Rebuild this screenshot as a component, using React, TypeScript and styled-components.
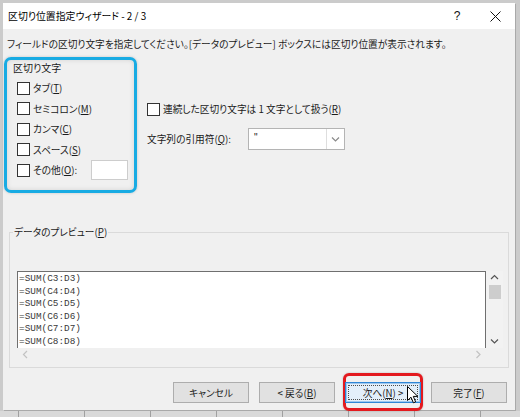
import React from 'react'
import styled, { createGlobalStyle } from 'styled-components'

const GlobalStyle = createGlobalStyle`
  body {
    margin: 0;
    background: #cbcbcb;
    font-family: "Noto Sans CJK JP", "Noto Sans", sans-serif;
    overflow: hidden;
  }
`

const Window = styled.div`
  margin: 3px 0 0 3px;
  width: 512px;
  height: 407px;
  background: #f0f0f0;
  color: #1b1b1b;
  font-size: 9.7px;
  font-feature-settings: 'palt';
  display: flex;
  flex-direction: column;
  box-shadow: 1px 1px 0 #a9a9a9;
`

const TitleBar = styled.div`
  height: 26px;
  background: #fff;
  display: flex;
  align-items: center;
  padding-left: 5px;
`

const Title = styled.div`
  flex: 1;
  font-size: 9.9px;
  color: #000;
`

const TitleButton = styled.div<{ $w: number }>`
  width: ${p => p.$w}px;
  height: 26px;
  display: flex;
  align-items: center;
  justify-content: center;
  font-family: "Liberation Sans", sans-serif;
  font-size: 12px;
  color: #111;
`

const Instruction = styled.div`
  margin: 8px 0 0 4px;
  height: 14px;
  line-height: 14px;
`

const TopRow = styled.div`
  margin-top: 6px;
  display: flex;
  align-items: flex-start;
`

const DelimiterGroup = styled.div`
  margin-left: 1px;
  width: 133px;
  height: 136px;
  box-sizing: border-box;
  border: 3px solid #18abe3;
  border-radius: 7px;
  padding-left: 6px;
  box-shadow: inset 0 0 5px rgba(0, 0, 0, 0.12), 0 0 3px rgba(0, 0, 0, 0.18);
`

const GroupLabel = styled.div`
  height: 16px;
  line-height: 16px;
  font-size: 10px;
`

const CheckList = styled.div`
  margin-top: 2px;
  padding-left: 4px;
`

const CheckRow = styled.div<{ $h?: number }>`
  display: flex;
  align-items: center;
  gap: 3px;
  height: ${p => p.$h ?? 20.5}px;
  line-height: 14px;
`

const Box = styled.span`
  width: 13px;
  height: 13px;
  box-sizing: border-box;
  border: 1px solid #333;
  background: #fff;
  flex: none;
`

const Key = styled.u`
  text-underline-offset: 1px;
`

const OtherInput = styled.div`
  margin-left: auto;
  margin-right: 6px;
  width: 37px;
  height: 20px;
  box-sizing: border-box;
  background: #fff;
  border: 1px solid #cdcdcd;
`

const Options = styled.div`
  margin-left: 10px;
  padding-top: 43px;
`

const QuoteRow = styled.div`
  margin-top: 10px;
  height: 22px;
  display: flex;
  align-items: center;
`

const QuoteLabel = styled.span`
  width: 101px;
`

const Combo = styled.div`
  width: 97px;
  height: 22px;
  box-sizing: border-box;
  border: 1px solid #b4b4b4;
  background: #fff;
  display: flex;
`

const ComboValue = styled.div`
  flex: 1;
  padding-left: 5px;
  line-height: 18px;
  font-family: "Liberation Sans", sans-serif;
  font-size: 10px;
`

const ComboDrop = styled.div`
  width: 17px;
  border-left: 1px solid #dedede;
  display: flex;
  align-items: center;
  justify-content: center;
`

const Preview = styled.fieldset`
  margin: 32px 0 0 6px;
  padding: 0;
  width: 500px;
  height: 143px;
  box-sizing: border-box;
  border: 1px solid #dadada;
`

const PreviewLegend = styled.legend`
  margin-left: 3px;
  padding: 0 1px;
  line-height: 14px;
`

const ListArea = styled.div`
  margin: 32px 0 0 7px;
  display: flex;
`

const ListBox = styled.div`
  width: 469px;
  height: 77px;
  box-sizing: border-box;
  background: #fff;
  border: 1px solid #6f6f6f;
  border-bottom: none;
  padding: 1px 0 0 1px;
  overflow: hidden;
  font-family: "Liberation Mono", "DejaVu Sans Mono", monospace;
  font-size: 9.4px;
  line-height: 12.6px;
  color: #3a3a3a;
`

const VScroll = styled.div`
  width: 17px;
  height: 77px;
  background: #f2f2f2;
  display: flex;
  flex-direction: column;
  align-items: center;
`

const ArrowCell = styled.div<{ $bottom?: boolean }>`
  height: ${p => (p.$bottom ? 14 : 13)}px;
  margin-top: ${p => (p.$bottom ? 'auto' : '0')};
  display: flex;
  align-items: center;
`

const Thumb = styled.div`
  margin-top: 1px;
  width: 12px;
  height: 14px;
  background: #cdcdcd;
`

const HScroll = styled.div`
  margin-left: 7px;
  width: 469px;
  height: 12px;
  box-sizing: border-box;
  padding: 0 4px 0 5px;
  display: flex;
  align-items: center;
  justify-content: space-between;
`

const ButtonRow = styled.div`
  margin-top: 14px;
  padding-right: 8px;
  display: flex;
  justify-content: flex-end;
  gap: 10px;
`

const Button = styled.div<{ $focused?: boolean }>`
  position: relative;
  width: 76px;
  height: 21px;
  box-sizing: border-box;
  border: 1px solid ${p => (p.$focused ? '#2f86d6' : '#adadad')};
  background: ${p => (p.$focused ? '#e3effa' : '#e1e1e1')};
  display: flex;
  align-items: center;
  justify-content: center;
  line-height: 14px;
  ${p => p.$focused && 'box-shadow: inset 0 0 0 1px #9ec7ee;'}
`

const FocusRing = styled.span`
  position: absolute;
  inset: 2px;
  border: 1px dotted #4d4d4d;
`

const Callout = styled.div`
  position: relative;
  &::before {
    content: '';
    position: absolute;
    left: -2px;
    right: -2px;
    top: -9px;
    bottom: -8px;
    border: 3px solid #e3191e;
    border-radius: 6px;
    box-shadow: 0 0 2px rgba(0, 0, 0, 0.25);
  }
`

const Pointer = styled.svg`
  position: absolute;
  left: 61px;
  top: 3px;
`

const SheetEdge = styled.div`
  margin-top: 1px;
  height: 6px;
  background: repeating-linear-gradient(to right, #d9d9d9 0 18px, #a0a0a0 18px 19px, #d9d9d9 19px 66px);
`

const Chevron = ({ dir, color = '#555' }: { dir: 'up' | 'down' | 'left' | 'right'; color?: string }) => {
  const d = {
    up: 'M1 5 L4.5 1.5 L8 5',
    down: 'M1 1.5 L4.5 5 L8 1.5',
    left: 'M5 1 L1.5 4.5 L5 8',
    right: 'M1.5 1 L5 4.5 L1.5 8',
  }[dir]
  const vertical = dir === 'up' || dir === 'down'
  return (
    <svg width={vertical ? 9 : 7} height={vertical ? 7 : 9} viewBox={vertical ? '0 0 9 7' : '0 0 7 9'}>
      <path d={d} fill="none" stroke={color} strokeWidth="1.2" />
    </svg>
  )
}

const delimiters: { label: string; key: string }[] = [
  { label: 'タブ', key: 'T' },
  { label: 'セミコロン', key: 'M' },
  { label: 'カンマ', key: 'C' },
  { label: 'スペース', key: 'S' },
]

const rows = [3, 4, 5, 6, 7, 8].map(n => `=SUM(C${n}:D${n})`)

function App() {
  return (
    <>
      <GlobalStyle />
      <Window>
        <TitleBar>
          <Title>区切り位置指定ウィザード - 2 / 3</Title>
          <TitleButton $w={38}>?</TitleButton>
          <TitleButton $w={39}>
            <svg width="11" height="11" viewBox="0 0 11 11">
              <path d="M0.5 0.5 L10.5 10.5 M10.5 0.5 L0.5 10.5" stroke="#111" strokeWidth="1" />
            </svg>
          </TitleButton>
        </TitleBar>

        <Instruction>
          フィールドの区切り文字を指定してください。[データのプレビュー] ボックスには区切り位置が表示されます。
        </Instruction>

        <TopRow>
          <DelimiterGroup>
            <GroupLabel>区切り文字</GroupLabel>
            <CheckList>
              {delimiters.map(d => (
                <CheckRow key={d.key}>
                  <Box />
                  <span>
                    {d.label}(<Key>{d.key}</Key>)
                  </span>
                </CheckRow>
              ))}
              <CheckRow>
                <Box />
                <span>
                  その他(<Key>O</Key>):
                </span>
                <OtherInput />
              </CheckRow>
            </CheckList>
          </DelimiterGroup>

          <Options>
            <CheckRow $h={18}>
              <Box />
              <span>
                連続した区切り文字は 1 文字として扱う(<Key>R</Key>)
              </span>
            </CheckRow>
            <QuoteRow>
              <QuoteLabel>
                文字列の引用符(<Key>Q</Key>):
              </QuoteLabel>
              <Combo>
                <ComboValue>"</ComboValue>
                <ComboDrop>
                  <Chevron dir="down" color="#8a8a8a" />
                </ComboDrop>
              </Combo>
            </QuoteRow>
          </Options>
        </TopRow>

        <Preview>
          <PreviewLegend>
            データのプレビュー(<Key>P</Key>)
          </PreviewLegend>
          <ListArea>
            <ListBox>
              {rows.map(r => (
                <div key={r}>{r}</div>
              ))}
            </ListBox>
            <VScroll>
              <ArrowCell>
                <Chevron dir="up" />
              </ArrowCell>
              <Thumb />
              <ArrowCell $bottom>
                <Chevron dir="down" />
              </ArrowCell>
            </VScroll>
          </ListArea>
          <HScroll>
            <Chevron dir="left" color="#c2c2c2" />
            <Chevron dir="right" color="#c2c2c2" />
          </HScroll>
        </Preview>

        <ButtonRow>
          <Button>キャンセル</Button>
          <Button>
            &lt; 戻る(<Key>B</Key>)
          </Button>
          <Callout>
            <Button $focused>
              <FocusRing />
              次へ(<Key>N</Key>) &gt;
              <Pointer width="12" height="18" viewBox="0 0 12 18">
                <path
                  d="M0.5 0.5 L0.5 14.5 L4 11.2 L6.4 16.8 L8.6 15.9 L6.3 10.4 L10.8 10.4 Z"
                  fill="#fff"
                  stroke="#000"
                  strokeWidth="1"
                  strokeLinejoin="round"
                />
              </Pointer>
            </Button>
          </Callout>
          <Button>
            完了(<Key>F</Key>)
          </Button>
        </ButtonRow>
      </Window>
      <SheetEdge />
    </>
  )
}

export default App
